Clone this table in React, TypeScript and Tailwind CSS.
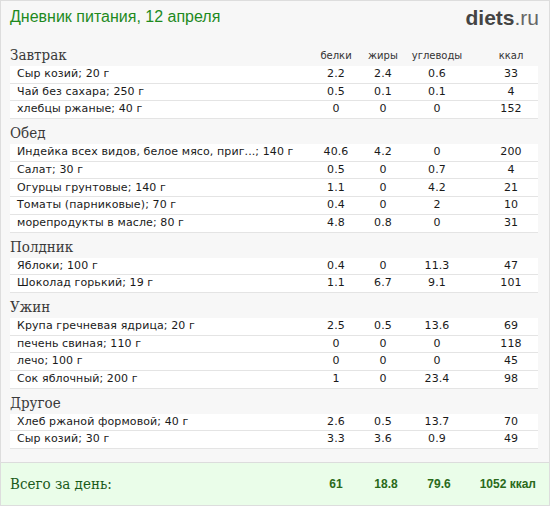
import React from 'react';

type Item = { name: string; p: string; f: string; c: string; k: string };
type Meal = { title: string; items: Item[] };

const meals: Meal[] = [
  {
    title: 'Завтрак',
    items: [
      { name: 'Сыр козий; 20 г', p: '2.2', f: '2.4', c: '0.6', k: '33' },
      { name: 'Чай без сахара; 250 г', p: '0.5', f: '0.1', c: '0.1', k: '4' },
      { name: 'хлебцы ржаные; 40 г', p: '0', f: '0', c: '0', k: '152' },
    ],
  },
  {
    title: 'Обед',
    items: [
      { name: 'Индейка всех видов, белое мясо, приг...; 140 г', p: '40.6', f: '4.2', c: '0', k: '200' },
      { name: 'Салат; 30 г', p: '0.5', f: '0', c: '0.7', k: '4' },
      { name: 'Огурцы грунтовые; 140 г', p: '1.1', f: '0', c: '4.2', k: '21' },
      { name: 'Томаты (парниковые); 70 г', p: '0.4', f: '0', c: '2', k: '10' },
      { name: 'морепродукты в масле; 80 г', p: '4.8', f: '0.8', c: '0', k: '31' },
    ],
  },
  {
    title: 'Полдник',
    items: [
      { name: 'Яблоки; 100 г', p: '0.4', f: '0', c: '11.3', k: '47' },
      { name: 'Шоколад горький; 19 г', p: '1.1', f: '6.7', c: '9.1', k: '101' },
    ],
  },
  {
    title: 'Ужин',
    items: [
      { name: 'Крупа гречневая ядрица; 20 г', p: '2.5', f: '0.5', c: '13.6', k: '69' },
      { name: 'печень свиная; 110 г', p: '0', f: '0', c: '0', k: '118' },
      { name: 'лечо; 100 г', p: '0', f: '0', c: '0', k: '45' },
      { name: 'Сок яблочный; 200 г', p: '1', f: '0', c: '23.4', k: '98' },
    ],
  },
  {
    title: 'Другое',
    items: [
      { name: 'Хлеб ржаной формовой; 40 г', p: '2.6', f: '0.5', c: '13.7', k: '70' },
      { name: 'Сыр козий; 30 г', p: '3.3', f: '3.6', c: '0.9', k: '49' },
    ],
  },
];

const sans = "font-['DejaVu_Sans',Verdana,sans-serif]";
const serif = "font-['DejaVu_Serif_Condensed','DejaVu_Serif',Georgia,serif]";

export default function App() {
  return (
    <div className="w-[550px] h-[506px] bg-[#f7f7f7] border border-[#dddddd] flex flex-col overflow-hidden">
      <div className="flex items-center justify-between px-[9px] h-[32px]">
        <span className="font-['Liberation_Sans',Arial,sans-serif] text-[16px] text-[#1e8a1e]">
          Дневник питания, 12 апреля
        </span>
        <span className="font-['Liberation_Sans',Arial,sans-serif] text-[21px] leading-none mr-[1px]">
          <b className="text-[#444]">diets</b>
          <span className="text-[#666]">.ru</span>
        </span>
      </div>

      <div className="flex-1 px-[9px] pt-[12px] pr-[11px]">
        {meals.map((m, i) => (
          <div key={m.title} className={i > 0 ? 'mt-[4px]' : ''}>
            <div className="flex items-center h-[21px]">
              <span className={`${serif} text-[15px] text-[#3a3a3a] flex-1 leading-none`}>{m.title}</span>
              {i === 0 && (
                <div className={`${sans} text-[10px] text-[#333] flex leading-none`}>
                  <span className="w-[48px] text-center">белки</span>
                  <span className="w-[46px] text-center">жиры</span>
                  <span className="w-[62px] text-center">углеводы</span>
                  <span className="w-[16px]" />
                  <span className="w-[54px] text-center">ккал</span>
                </div>
              )}
            </div>
            {m.items.map((it) => (
              <div
                key={it.name}
                className={`${sans} text-[11px] tracking-[0.1px] text-[#1a1a1a] bg-white border-b border-[#e4e4e4] h-[17.7px] flex items-center`}
              >
                <span className="flex-1 pl-[7px] whitespace-nowrap">{it.name}</span>
                <span className="w-[48px] text-center">{it.p}</span>
                <span className="w-[46px] text-center">{it.f}</span>
                <span className="w-[62px] text-center">{it.c}</span>
                <span className="w-[16px]" />
                <span className="w-[54px] text-center">{it.k}</span>
              </div>
            ))}
          </div>
        ))}
      </div>

      <div className="h-[43px] bg-[#eafde9] border-t border-[#dcdcdc] flex items-center px-[9px] pr-[11px]">
        <span className={`${serif} text-[15px] text-[#1a5a1a] flex-1`}>Всего за день:</span>
        <div className="font-['Liberation_Sans',Arial,sans-serif] font-bold text-[12px] text-[#2a6a1a] flex">
          <span className="w-[48px] text-center">61</span>
          <span className="w-[46px] text-center pl-[6px]">18.8</span>
          <span className="w-[62px] text-center pl-[4px]">79.6</span>
          <span className="w-[70px] text-right pr-[2px]">1052 ккал</span>
        </div>
      </div>
    </div>
  );
}
